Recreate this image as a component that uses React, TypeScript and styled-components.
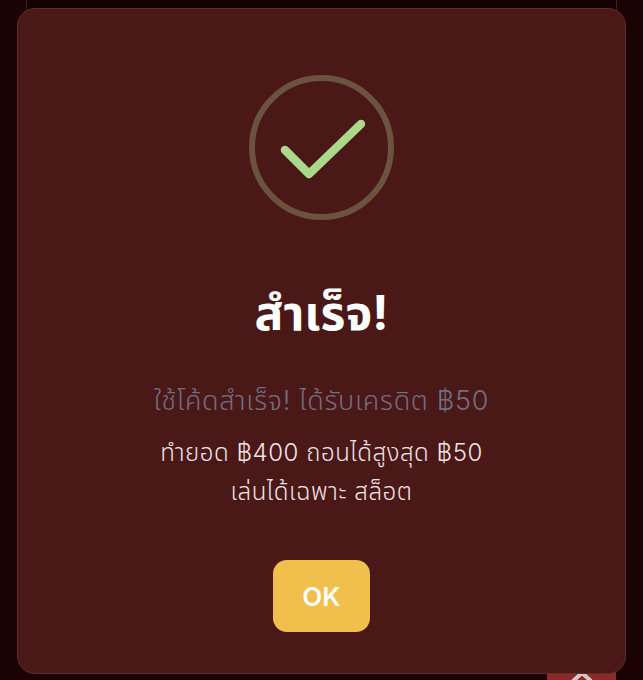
import styled, { createGlobalStyle } from "styled-components";

const GlobalStyle = createGlobalStyle`
  html, body {
    margin: 0;
    padding: 0;
    height: 100%;
    background-color: #1b0304;
    font-family: "Inter", "Noto Sans Thai", "Noto Sans", "DejaVu Sans", sans-serif;
  }
`;

const Page = styled.div`
  position: relative;
  width: 643px;
  height: 680px;
  overflow: hidden;
  background-color: #1b0304;
`;

const BackCard = styled.div`
  position: absolute;
  top: -12px;
  left: 26px;
  right: 26px;
  height: 60px;
  border: 1px solid #3a1e1c;
  border-radius: 12px;
  background-color: #140203;
`;

const CornerTab = styled.div`
  position: absolute;
  top: 670px;
  left: 547px;
  width: 69px;
  height: 40px;
  background-color: #8a2a29;
  display: flex;
  justify-content: center;
`;

const Modal = styled.div`
  position: absolute;
  top: 8px;
  left: 17px;
  width: 609px;
  height: 666px;
  box-sizing: border-box;
  padding-top: 66px;
  display: flex;
  flex-direction: column;
  align-items: center;
  text-align: center;
  background-color: #4a1817;
  border: 1px solid #5f2e2c;
  border-radius: 18px;
`;

const Title = styled.h2`
  margin: 63px 0 0;
  height: 60px;
  line-height: 60px;
  font-size: 48px;
  font-weight: 700;
  color: #ffffff;
`;

const Subtitle = styled.p`
  margin: 38px 0 0;
  line-height: 40px;
  font-size: 27px;
  font-weight: 300;
  letter-spacing: 0.7px;
  color: #736d82;
`;

const Detail = styled.p`
  margin: 12px 0 0;
  line-height: 39px;
  font-size: 24px;
  font-weight: 300;
  letter-spacing: 0.55px;
  color: #f0e2e6;
`;

const OkButton = styled.button`
  margin-top: 49px;
  width: 97px;
  height: 72px;
  border: none;
  border-radius: 14px;
  background-color: #f1bf4c;
  color: #ffffff;
  font-family: inherit;
  font-size: 26px;
  font-weight: 600;
`;

function SuccessIcon() {
  return (
    <svg width="145" height="145" viewBox="0 0 145 145" fill="none">
      <circle cx="72.5" cy="72.5" r="69.5" stroke="#6b5340" strokeWidth="6" />
      <path
        d="M36 75 L60 99 L112 49"
        stroke="#aad98c"
        strokeWidth="8.5"
        strokeLinecap="round"
        strokeLinejoin="round"
      />
    </svg>
  );
}

function App() {
  return (
    <Page>
      <GlobalStyle />
      <BackCard />
      <CornerTab>
        <svg width="26" height="12" viewBox="0 0 26 12" fill="none">
          <path d="M4 11 L13 3 L22 11" stroke="#d9c6c6" strokeWidth="4" />
        </svg>
      </CornerTab>
      <Modal>
        <SuccessIcon />
        <Title>สำเร็จ!</Title>
        <Subtitle>ใช้โค้ดสำเร็จ! ได้รับเครดิต ฿50</Subtitle>
        <Detail>
          ทำยอด ฿400 ถอนได้สูงสุด ฿50
          <br />
          เล่นได้เฉพาะ สล็อต
        </Detail>
        <OkButton>OK</OkButton>
      </Modal>
    </Page>
  );
}

export default App;
